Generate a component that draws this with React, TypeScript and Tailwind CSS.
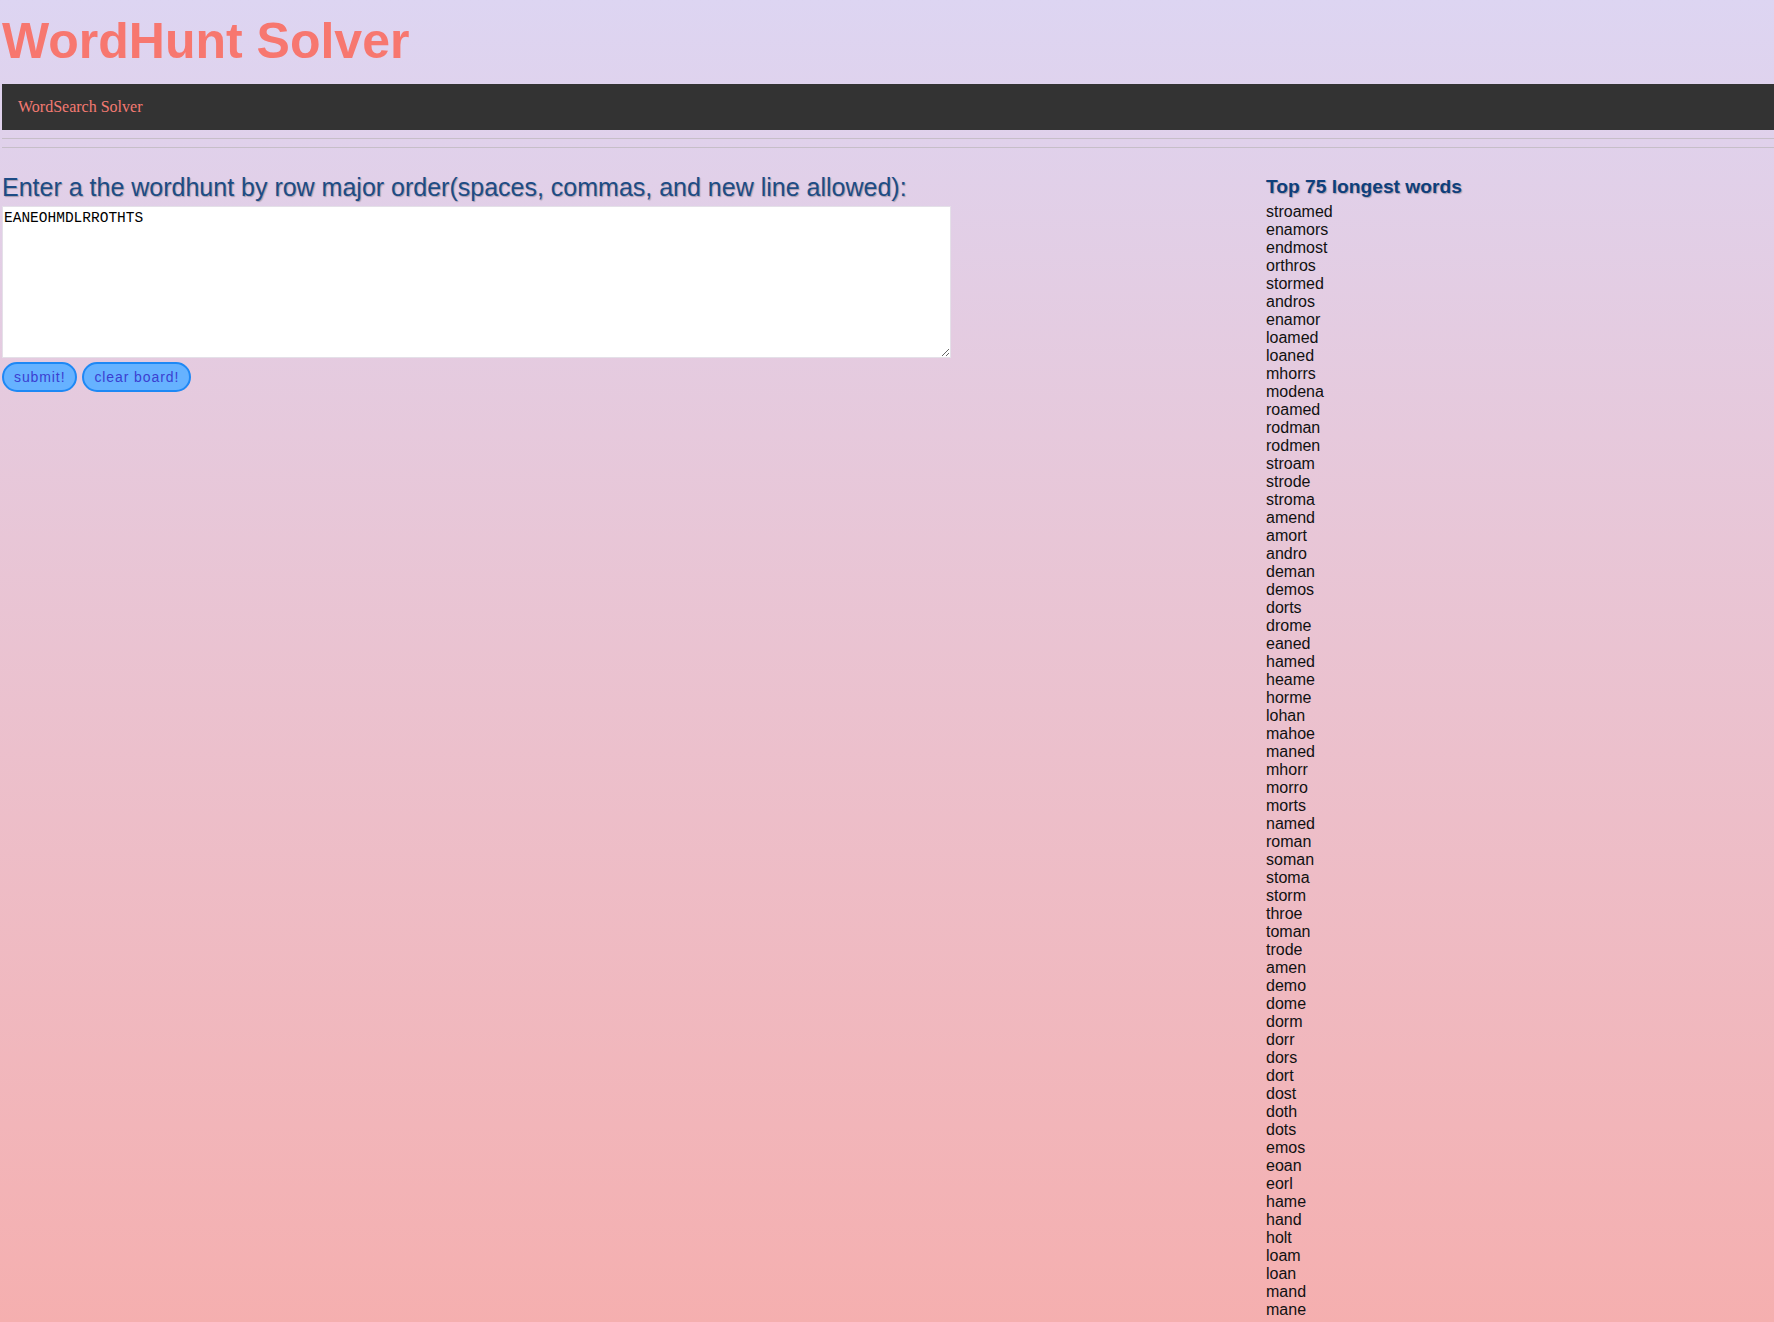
import React from "react";

const words = [
  "stroamed","enamors","endmost","orthros","stormed","andros","enamor","loamed","loaned","mhorrs",
  "modena","roamed","rodman","rodmen","stroam","strode","stroma","amend","amort","andro",
  "deman","demos","dorts","drome","eaned","hamed","heame","horme","lohan","mahoe",
  "maned","mhorr","morro","morts","named","roman","soman","stoma","storm","throe",
  "toman","trode","amen","demo","dome","dorm","dorr","dors","dort","dost",
  "doth","dots","emos","eoan","eorl","hame","hand","holt","loam","loan",
  "mand","mane","mano","mead","mend","moan","mode","mola","mort","most",
  "mote","moth","nard",
];

export default function App() {
  return (
    <div className="min-h-screen bg-fixed bg-linear-to-b from-[#ddd5f2] to-[#f5afaf] pl-[2px] pt-[13px] pb-[10px] font-['Liberation_Sans',Arial,sans-serif]">
      <h1 className="mb-[14px] text-[50px] leading-[57px] font-bold text-[#f7776f]">
        WordHunt Solver
      </h1>
      <nav className="h-[46px] bg-[#333333] flex items-center pl-[16px]">
        <span className="font-['Liberation_Serif','Times_New_Roman',serif] text-[16px] text-[#f47a72]">
          WordSearch Solver
        </span>
      </nav>
      <div className="mt-[8px] h-px bg-[#c6bec8]" />
      <div className="mt-[8px] h-px bg-[#c6bec8]" />
      <div className="grid grid-cols-[1264px_1fr] mt-[25px]">
        <div className="flex flex-col items-start">
          <label className="text-[25px] leading-[29px] text-[#1d4c85] [text-shadow:1px_1px_1px_rgba(0,0,0,0.25)]">
            Enter a the wordhunt by row major order(spaces, commas, and new line allowed):
          </label>
          <textarea
            className="mt-[4px] w-[949px] h-[152px] bg-white border border-[#e4e0e8] font-['Liberation_Mono',monospace] text-[14.5px] leading-[17px] text-black pt-[3px] px-[1px] outline-none"
            defaultValue="EANEOHMDLRROTHTS"
          />
          <div className="mt-[4px] flex gap-[5px]">
            <button className="h-[30px] rounded-full border-2 border-[#1e88f5] bg-[#66b2ff] px-[10px] text-[14px] tracking-[0.9px] text-[#3b3fd1]">
              submit!
            </button>
            <button className="h-[30px] rounded-full border-2 border-[#1e88f5] bg-[#66b2ff] px-[10px] text-[14px] tracking-[0.9px] text-[#3b3fd1]">
              clear board!
            </button>
          </div>
        </div>
        <div className="flex flex-col">
          <h3 className="text-[19.2px] leading-[24px] font-bold text-[#0e3f7c] [text-shadow:1px_1px_1px_rgba(0,0,0,0.25)] mt-[2px] mb-[4px]">
            Top 75 longest words
          </h3>
          <ul>
            {words.map((w, i) => (
              <li key={i} className="text-[16px] leading-[18px] text-[#111]">
                {w}
              </li>
            ))}
          </ul>
        </div>
      </div>
    </div>
  );
}
